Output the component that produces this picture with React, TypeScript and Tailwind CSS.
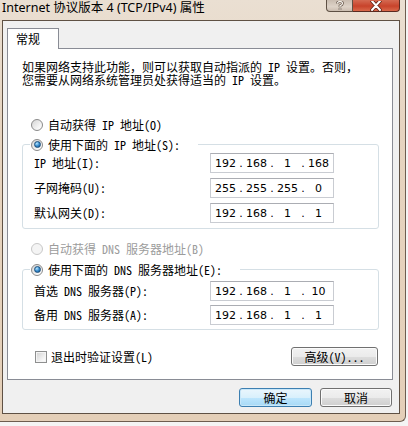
import type { ReactNode } from "react";

const FONT = { fontFamily: '"Noto Sans Mono CJK SC", "Noto Sans CJK SC", "Noto Sans", sans-serif' };

function Radio({ checked = false, disabled = false }: { checked?: boolean; disabled?: boolean }) {
  return (
    <span
      className={`flex h-[12px] w-[12px] shrink-0 items-center justify-center rounded-full border ${
        disabled
          ? "border-[#c8c8c8] bg-[#f4f4f4]"
          : "border-[#8a8a8a] bg-[linear-gradient(135deg,#d4d4d4,#f6f6f6_70%,#ffffff)]"
      }`}
    >
      {checked && (
        <span className="h-[7px] w-[7px] rounded-full border border-[#1c4f7c] bg-[radial-gradient(circle_at_35%_30%,#b8e6ff,#3a8fd0_50%,#0f4a85)]" />
      )}
    </span>
  );
}

function IpBox({ parts }: { parts: string[] }) {
  return (
    <div
      className="flex h-full w-[124px] items-center border border-[#c9ccd2] border-t-[#abadb3] bg-white pl-[2px] leading-none text-black"
      style={{ fontFamily: '"DejaVu Sans", "Liberation Sans", sans-serif', fontSize: 11 }}
    >
      {parts.map((p, i) => (
        <div key={i} className="flex items-center">
          {i > 0 && <span className="w-[6px] text-center">.</span>}
          <span className="w-[25px] text-center">{p}</span>
        </div>
      ))}
    </div>
  );
}

function Row({ label, parts }: { label: string; parts: string[] }) {
  return (
    <div className="flex h-[20px] items-center">
      <span className="w-[176px] whitespace-nowrap">{label}</span>
      <IpBox parts={parts} />
    </div>
  );
}

function Group({ legend, children, body }: { legend: ReactNode; children: ReactNode; body: string }) {
  return (
    <div className={`relative ml-[14px] w-[357px] rounded-[3px] border border-[#d5dfe5] ${body}`}>
      <div className="absolute -top-[7px] left-[7px] flex h-[13px] items-center gap-[5px] bg-white pl-[1px] pr-[18px]">
        {legend}
      </div>
      {children}
    </div>
  );
}

function WinButton({ children, primary = false, w }: { children: ReactNode; primary?: boolean; w: string }) {
  return (
    <button
      className={`flex h-[19px] ${w} items-center justify-center rounded-[3px] border text-[12px] leading-none text-black ${
        primary
          ? "border-[#3c7fb1] bg-[linear-gradient(to_bottom,#eaf6fd_0%,#d9f0fc_50%,#bee6fd_51%,#a7d9f5_100%)] shadow-[inset_0_0_0_1px_#c8e7f9]"
          : "border-[#707070] bg-[linear-gradient(to_bottom,#f2f2f2_0%,#ebebeb_50%,#dddddd_51%,#cfcfcf_100%)] shadow-[inset_0_0_0_1px_#fbfbfb]"
      }`}
    >
      {children}
    </button>
  );
}

export default function App() {
  return (
    <div className="h-[426px] w-[408px] overflow-hidden bg-[#f4f4f4] text-[12px] text-black" style={FONT}>
      <div className="flex h-[422px] w-[406px] flex-col rounded-br-[6px] border-b border-r border-[#6d5d4f] bg-[linear-gradient(to_bottom,#eadfd2,#e6d4c0_30%,#e4cfb8)]">
        {/* Title bar */}
        <div className="flex h-[20px] items-start justify-between pl-[2px]">
          <span className="pt-[1px] text-[12.5px] leading-[14px] text-black" style={{ fontFamily: '"Noto Sans", "Noto Sans CJK SC", sans-serif' }}>
            Internet 协议版本 4 (TCP/IPv4) 属性
          </span>
          <div className="mr-[5px] flex">
            <div className="flex h-[12px] w-[27px] items-center justify-center rounded-bl-[4px] border border-t-0 border-[#5e5044] bg-[linear-gradient(to_bottom,#c9bcb0,#ddd2c7_60%,#cbbdb0)]">
              <svg width="8" height="9" viewBox="0 0 8 9">
                <path d="M1.5 2.5 Q1.5 0.5 4 0.5 Q6.5 0.5 6.5 2.5 Q6.5 3.8 4 4.8 L4 6" fill="none" stroke="#5a4a3e" strokeWidth="2.6" />
                <path d="M1.5 2.5 Q1.5 0.5 4 0.5 Q6.5 0.5 6.5 2.5 Q6.5 3.8 4 4.8 L4 6" fill="none" stroke="#f4f0ea" strokeWidth="1.3" />
                <rect x="3" y="7" width="2" height="2" fill="#f4f0ea" stroke="#5a4a3e" strokeWidth="0.5" />
              </svg>
            </div>
            <div className="flex h-[12px] w-[47px] items-center justify-center rounded-br-[4px] border border-l-0 border-t-0 border-[#5a2a20] bg-[linear-gradient(to_bottom,#d46a52,#c8432b_55%,#d9684a)]">
              <svg width="14" height="10" viewBox="0 0 14 10">
                <path d="M3 0 L11 9 M11 0 L3 9" stroke="#5a2418" strokeWidth="3.6" strokeLinecap="round" />
                <path d="M3 0 L11 9 M11 0 L3 9" stroke="#ffffff" strokeWidth="2" strokeLinecap="round" />
              </svg>
            </div>
          </div>
        </div>

        {/* Client area */}
        <div className="ml-[2px] mr-[5px] flex h-[394px] flex-col border border-[#5f5144] bg-[#f0f0f0]">
          {/* Tab */}
          <div className="ml-[4px] mt-[7px] flex">
            <div className="relative z-10 -mb-px flex h-[21px] w-[52px] items-center border border-b-0 border-[#898c95] bg-white pl-[8px]">
              常规
            </div>
          </div>

          {/* Tab panel */}
          <div className="ml-[4px] flex w-[386px] flex-col border border-[#898c95] bg-white pb-[13px] pt-[11px]">
            <div className="whitespace-nowrap pl-[14px] leading-[13px]">
              <div>如果网络支持此功能，则可以获取自动指派的 IP 设置。否则，</div>
              <div>您需要从网络系统管理员处获得适当的 IP 设置。</div>
            </div>

            <div className="ml-[23px] mt-[32px] flex h-[13px] items-center gap-[5px]">
              <Radio />
              <span>自动获得 IP 地址(O)</span>
            </div>

            <div className="mt-[13px]">
              <Group
                body="pl-[11px] pt-[8px] pb-[5px]"
                legend={
                  <>
                    <Radio checked />
                    <span className="whitespace-nowrap">使用下面的 IP 地址(S):</span>
                  </>
                }
              >
                <div className="flex flex-col gap-[5px]">
                  <Row label="IP 地址(I):" parts={["192", "168", "1", "168"]} />
                  <Row label="子网掩码(U):" parts={["255", "255", "255", "0"]} />
                  <Row label="默认网关(D):" parts={["192", "168", "1", "1"]} />
                </div>
              </Group>
            </div>

            <div className="ml-[23px] mt-[13px] flex h-[13px] items-center gap-[5px] text-[#9c9c9c]">
              <Radio disabled />
              <span>自动获得 DNS 服务器地址(B)</span>
            </div>

            <div className="mt-[14px]">
              <Group
                body="pl-[11px] pt-[11px] pb-[4px]"
                legend={
                  <>
                    <Radio checked />
                    <span className="whitespace-nowrap">使用下面的 DNS 服务器地址(E):</span>
                  </>
                }
              >
                <div className="flex flex-col gap-[4px]">
                  <Row label="首选 DNS 服务器(P):" parts={["192", "168", "1", "10"]} />
                  <Row label="备用 DNS 服务器(A):" parts={["192", "168", "1", "1"]} />
                </div>
              </Group>
            </div>

            <div className="mt-[17px] flex h-[19px] items-center justify-between pl-[27px] pr-[14px]">
              <div className="flex items-center gap-[4px]">
                <span className="h-[12px] w-[12px] border border-[#8e8f8f] bg-[linear-gradient(135deg,#d0d0d0,#f4f4f4_70%,#ffffff)] shadow-[inset_0_0_0_1px_#f4f4f4]" />
                <span>退出时验证设置(L)</span>
              </div>
              <WinButton w="w-[87px]">高级(V)...</WinButton>
            </div>
          </div>

          {/* Dialog buttons */}
          <div className="ml-[236px] mt-[8px] flex gap-[8px]">
            <WinButton primary w="w-[73px]">确定</WinButton>
            <WinButton w="w-[72px]">取消</WinButton>
          </div>
        </div>
      </div>
    </div>
  );
}
